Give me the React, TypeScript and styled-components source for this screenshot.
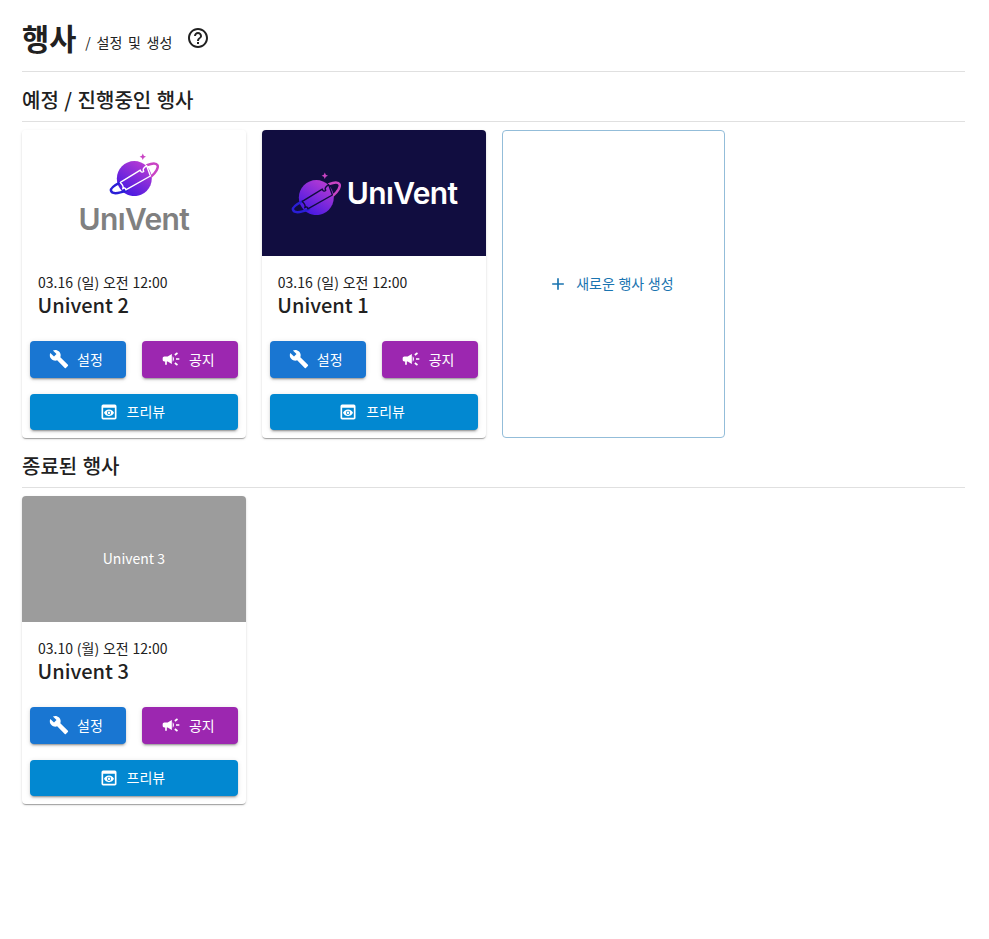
import React from "react";
import styled, { createGlobalStyle } from "styled-components";
import { MdAdd, MdBuild, MdCampaign, MdHelpOutline, MdPreview } from "react-icons/md";

const Global = createGlobalStyle`
  html, body { margin: 0; padding: 0; background: #fff; }
  body { font-family: "Noto Sans CJK KR", "Noto Sans", sans-serif; color: rgba(0,0,0,.87); }
`;

const Page = styled.div`
  padding: 0 24px 0 22px;
  min-height: 939px;
  box-sizing: border-box;
`;
const PageHeader = styled.header`
  display: flex;
  align-items: center;
  height: 71px;
  border-bottom: 1px solid #e0e0e0;
  box-sizing: content-box;
`;
const PageTitle = styled.h1`
  margin: 2px 0 0;
  font-size: 29.5px;
  line-height: 40px;
  font-weight: 700;
  letter-spacing: 0;
  color: #212121;
`;
const PageSub = styled.span`
  margin-left: 9px;
  margin-top: 12px;
  font-size: 14px;
  line-height: 20px;
  word-spacing: 2.6px;
  color: #212121;
`;
const HelpButton = styled.span`
  display: flex;
  margin-left: 14px;
  margin-top: 5px;
  color: #212121;
  font-size: 24px;
`;
const SectionHeader = styled.h2`
  margin: 0 0 8px;
  padding-top: 14px;
  height: 35px;
  box-sizing: content-box;
  border-bottom: 1px solid #e0e0e0;
  font-size: 20px;
  line-height: 28px;
  font-weight: 500;
  word-spacing: 1px;
  color: #212121;
`;
const CardGrid = styled.div`
  display: grid;
  grid-template-columns: repeat(4, 1fr);
  gap: 16px;
  height: 308px;
`;
const Card = styled.article`
  display: flex;
  flex-direction: column;
  background: #fff;
  border-radius: 4px;
  overflow: hidden;
  box-shadow: 0 2px 1px -1px rgba(0,0,0,.2), 0 1px 1px 0 rgba(0,0,0,.14), 0 1px 3px 0 rgba(0,0,0,.12);
`;
const Banner = styled.div<{ $bg: string; $column?: boolean }>`
  height: 126px;
  flex: none;
  display: flex;
  flex-direction: ${(p) => (p.$column ? "column" : "row")};
  align-items: center;
  justify-content: center;
  gap: ${(p) => (p.$column ? "8px" : "6px")};
  background: ${(p) => p.$bg};
`;
const BannerText = styled.span`
  padding-bottom: 2px;
  color: #fff;
  font-size: 14px;
  line-height: 20px;
`;
const LogoText = styled.span<{ $color: string }>`
  font-family: "Inter", sans-serif;
  font-weight: 600;
  font-size: 30px;
  line-height: 30px;
  letter-spacing: -0.6px;
  color: ${(p) => p.$color};
`;
const CardBody = styled.div`
  padding: 16px 16px 0;
  height: 85px;
  box-sizing: border-box;
`;
const DateText = styled.div`
  font-size: 14px;
  line-height: 20px;
  word-spacing: 0.7px;
  color: #212121;
`;
const CardName = styled.div`
  margin-left: -0.5px;
  font-size: 20px;
  line-height: 26px;
  font-weight: 500;
  color: #212121;
`;
const Actions = styled.div`
  display: grid;
  grid-template-columns: 1fr 1fr;
  gap: 16px;
  padding: 0 8px;
`;
const ActionButton = styled.button<{ $bg: string; $wide?: boolean; $h: number }>`
  grid-column: ${(p) => (p.$wide ? "1 / -1" : "auto")};
  display: flex;
  align-items: center;
  justify-content: center;
  gap: 8px;
  height: ${(p) => p.$h}px;
  padding: 0 4px 2px 0;
  border: 0;
  border-radius: 4px;
  background: ${(p) => p.$bg};
  color: #fff;
  font-family: inherit;
  font-size: 14px;
  box-shadow: 0 3px 1px -2px rgba(0,0,0,.2), 0 2px 2px 0 rgba(0,0,0,.14), 0 1px 5px 0 rgba(0,0,0,.12);
  svg { font-size: 20px; flex: none; margin-top: 1px; }
`;
const AddCard = styled.button`
  display: flex;
  align-items: center;
  justify-content: center;
  gap: 8px;
  background: #fff;
  border: 1px solid #93bdd9;
  border-radius: 4px;
  color: #1a74b0;
  font-family: inherit;
  font-size: 14px;
  word-spacing: 0.5px;
  padding: 0 5px 2px 0;
  svg { font-size: 20px; margin-top: 1px; }
`;

function Mark({ band, id }: { band: string; id: string }) {
  return (
    <svg width="51" height="44" viewBox="0 0 51 44" fill="none">
      <defs>
        <linearGradient id={id} x1="36" y1="11" x2="16" y2="42" gradientUnits="userSpaceOnUse">
          <stop offset="0" stopColor="#b63ad4" />
          <stop offset="1" stopColor="#4418e2" />
        </linearGradient>
      </defs>
      <g transform="translate(0.8 0.6)">
        <path d="M34 1 L35 3.2 L37.2 4.2 L35 5.2 L34 7.4 L33 5.2 L30.8 4.2 L33 3.2 Z" fill="#c944c4" />
        <circle cx="25.5" cy="26" r="17.5" fill={`url(#${id})`} />
        <path d="M38.2 12.6 C43 10.6 47.6 10.4 48.8 12.8 C49.8 15 47 20 42.6 23.6" stroke="#c944c4" strokeWidth="2.5" strokeLinecap="round" />
        <path d="M11.5 29.8 C6.4 32.4 1.6 35.6 2.1 38 C2.8 41.2 8 41.8 18.2 37.5" stroke="#2a1fd6" strokeWidth="2.5" strokeLinecap="round" />
        <path
          d="M11.5 29.8 L31.5 17.5 C32 20 34 20 35 18.6 C33.4 17 34.8 15 37.8 13 L41.6 23.4 L17 37.2 C16.8 35 14.8 35 13.8 36.2 C15.6 33.8 13.8 32 11.5 29.8 Z"
          stroke={band}
          strokeWidth="1.4"
          strokeLinejoin="round"
        />
      </g>
    </svg>
  );
}

function Buttons() {
  return (
    <Actions>
      <ActionButton $bg="#1976d2" $h={37}><MdBuild />설정</ActionButton>
      <ActionButton $bg="#9c27b0" $h={37}><MdCampaign />공지</ActionButton>
      <ActionButton $bg="#0288d1" $h={36} $wide><MdPreview />프리뷰</ActionButton>
    </Actions>
  );
}

function EventCard({ banner, date, name }: { banner: React.ReactNode; date: string; name: string }) {
  return (
    <Card>
      {banner}
      <CardBody>
        <DateText>{date}</DateText>
        <CardName>{name}</CardName>
      </CardBody>
      <Buttons />
    </Card>
  );
}

export default function App() {
  return (
    <Page>
      <Global />
      <PageHeader>
        <PageTitle>행사</PageTitle>
        <PageSub>/ 설정 및 생성</PageSub>
        <HelpButton><MdHelpOutline /></HelpButton>
      </PageHeader>
      <SectionHeader>예정 / 진행중인 행사</SectionHeader>
      <CardGrid>
        <EventCard
          date="03.16 (일) 오전 12:00"
          name="Univent 2"
          banner={
            <Banner $bg="#fff" $column>
              <Mark band="#fff" id="g1" />
              <LogoText $color="#808080">UnıVent</LogoText>
            </Banner>
          }
        />
        <EventCard
          date="03.16 (일) 오전 12:00"
          name="Univent 1"
          banner={
            <Banner $bg="#110d40">
              <Mark band="#110d40" id="g2" />
              <LogoText $color="#fff">UnıVent</LogoText>
            </Banner>
          }
        />
        <AddCard><MdAdd />새로운 행사 생성</AddCard>
      </CardGrid>
      <SectionHeader>종료된 행사</SectionHeader>
      <CardGrid>
        <EventCard
          date="03.10 (월) 오전 12:00"
          name="Univent 3"
          banner={
            <Banner $bg="#9c9c9c">
              <BannerText>Univent 3</BannerText>
            </Banner>
          }
        />
      </CardGrid>
    </Page>
  );
}
